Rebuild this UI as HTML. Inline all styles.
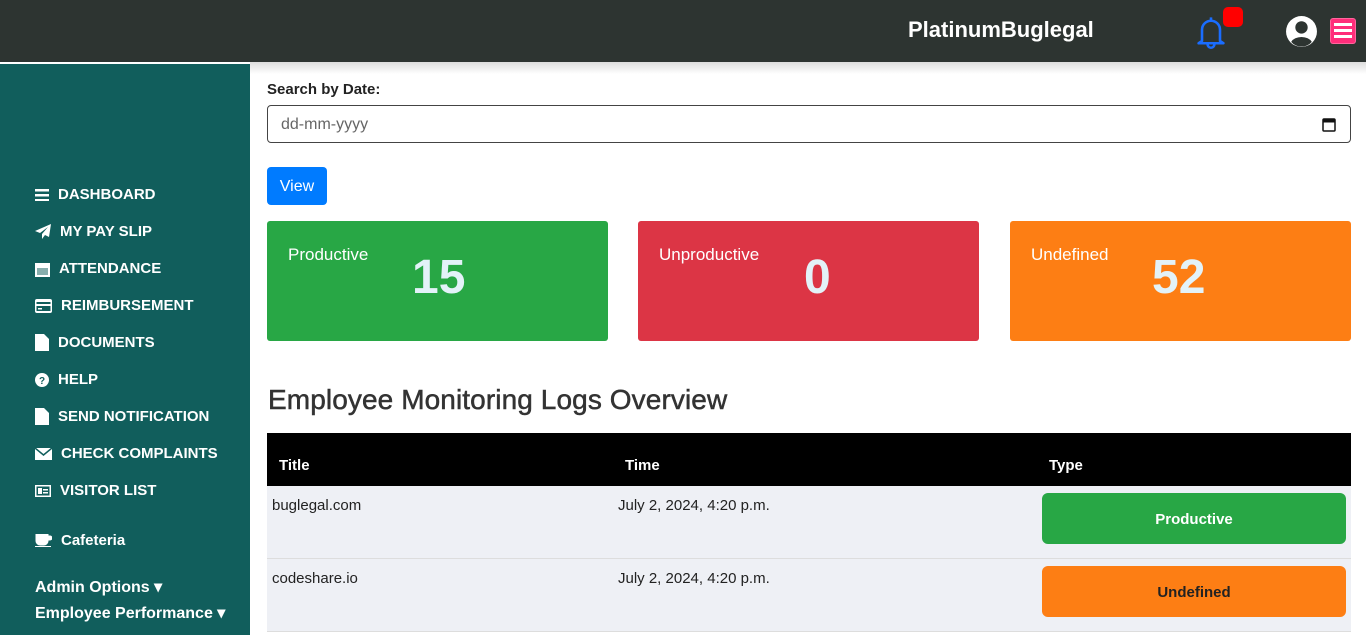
<!DOCTYPE html>
<html><head><meta charset="utf-8"><style>
*{margin:0;padding:0;box-sizing:border-box}
body{width:1366px;height:635px;overflow:hidden;font-family:"Liberation Sans",sans-serif;background:#fff;position:relative}
.hdr{position:absolute;left:0;top:0;width:1366px;height:62px;background:#2d3431}
.brand{position:absolute;left:908px;top:17px;color:#fff;font-weight:bold;font-size:22px}
.shadow{position:absolute;left:250px;top:62px;width:1116px;height:12px;background:linear-gradient(#ddd,#fff)}
.side{position:absolute;left:0;top:64px;width:250px;height:571px;background:#115e5c;color:#fff}
.side div{position:absolute;left:35px;font-weight:bold;font-size:15px;display:flex;align-items:center}
.side svg{margin-right:9px}
.lbl{position:absolute;left:267px;top:81px;font-weight:bold;font-size:15px;color:#222}
.inp{position:absolute;left:267px;top:105px;width:1084px;height:38px;border:1px solid #444;border-radius:4px;font-size:16px;color:#666;padding:10px 13px}
.btn{position:absolute;left:267px;top:167px;width:60px;height:38px;background:#007bff;border-radius:4px;color:#fff;font-size:16px;text-align:center;line-height:40px}
.card{position:absolute;top:221px;width:341px;height:120px;border-radius:3px;color:#fff}
.card span{position:absolute;left:21px;top:24px;font-size:17px}
.card b{position:absolute;top:29px;font-size:48px;color:#e3f2f8}
h2{position:absolute;left:268px;top:384px;font-size:28px;font-weight:bold;color:#333;letter-spacing:.1px}
.th{position:absolute;left:267px;top:433px;width:1084px;height:53px;background:#000;color:#fff;font-weight:bold;font-size:15px}
.th span{position:absolute;top:24px}
.row{position:absolute;left:267px;width:1084px;height:73px;background:#eef0f5;border-bottom:1px solid #ddd;font-size:15px;color:#222}
.row span{position:absolute;top:11px}
.badge{position:absolute;left:775px;top:7px;width:304px;height:51px;border-radius:6px;text-align:center;line-height:53px;font-weight:bold;font-size:15px}
</style></head><body>
<div class="hdr">
<div class="brand">PlatinumBuglegal</div>
<svg style="position:absolute;left:1194px;top:14px" width="34" height="36" viewBox="0 0 30 32"><path d="M15 3v2M7 24V14a8 8 0 0 1 16 0v10l3 2H4z" fill="none" stroke="#1a6dff" stroke-width="2.3" stroke-linejoin="round"/><path d="M12 27a3 3 0 0 0 6 0" fill="none" stroke="#1a6dff" stroke-width="2.3"/></svg>
<div style="position:absolute;left:1223px;top:7px;width:20px;height:20px;background:#f00;border-radius:5px"></div>
<svg style="position:absolute;left:1285px;top:15px" width="33" height="33" viewBox="0 0 32 32"><circle cx="16" cy="16" r="15" fill="#fff"/><circle cx="16" cy="12" r="6" fill="#2d3431"/><path d="M6 26a11 8 0 0 1 20 0a13 13 0 0 1-20 0z" fill="#2d3431"/></svg>
<div style="position:absolute;left:1330px;top:18px;width:26px;height:26px;background:#ff2d7a;border-radius:3px;border:1px solid #fff4"></div>
<div style="position:absolute;left:1334px;top:23px;width:18px;height:2.5px;background:#fff;box-shadow:0 6px #fff,0 12px #fff"></div>
</div>
<div class="shadow"></div>
<div class="side">
<div style="top:122px"><svg width="14" height="12"><rect y="0" width="14" height="2.5" fill="#fff"/><rect y="5" width="14" height="2.5" fill="#fff"/><rect y="10" width="14" height="2.5" fill="#fff"/></svg>DASHBOARD</div>
<div style="top:159px"><svg width="16" height="15" viewBox="0 0 16 15"><path d="M16 0L0 7l5 2 8-6-6 7v5l3-4 4 2z" fill="#fff"/></svg>MY PAY SLIP</div>
<div style="top:196px"><svg width="15" height="16"><rect y="2" width="15" height="14" fill="#fff"/><rect x="2" y="7" width="11" height="7" fill="#115e5c" opacity=".5"/></svg>ATTENDANCE</div>
<div style="top:233px"><svg width="17" height="14"><rect width="17" height="14" rx="2" fill="#fff"/><rect x="1.5" y="3" width="14" height="2" fill="#115e5c"/><rect x="1.5" y="7" width="14" height="5" fill="#115e5c"/><rect x="3" y="9" width="4" height="1.5" fill="#fff"/></svg>REIMBURSEMENT</div>
<div style="top:270px"><svg width="14" height="17"><path d="M0 0h9l5 5v12H0z" fill="#fff"/></svg>DOCUMENTS</div>
<div style="top:307px"><svg width="14" height="14"><circle cx="7" cy="7" r="7" fill="#fff"/><text x="7" y="11" font-size="10" font-weight="bold" text-anchor="middle" fill="#115e5c" font-family="Liberation Sans">?</text></svg>HELP</div>
<div style="top:344px"><svg width="14" height="17"><path d="M0 0h9l5 5v12H0z" fill="#fff"/></svg>SEND NOTIFICATION</div>
<div style="top:381px"><svg width="17" height="12"><rect width="17" height="12" fill="#fff"/><path d="M0 0l8.5 7L17 0" fill="none" stroke="#115e5c" stroke-width="1.5"/></svg>CHECK COMPLAINTS</div>
<div style="top:418px"><svg width="16" height="12"><rect width="16" height="12" fill="#fff"/><rect x="1.5" y="1.5" width="13" height="9" fill="#115e5c"/><rect x="3" y="3" width="4" height="6" fill="#fff"/><rect x="8" y="4" width="5" height="1.5" fill="#fff"/><rect x="8" y="7" width="5" height="1.5" fill="#fff"/></svg>VISITOR LIST</div>
<div style="top:468px;font-size:15px"><svg width="17" height="13"><path d="M1 0h12v7a4 4 0 0 1-4 4H5a4 4 0 0 1-4-4z M13 2h2a2 2 0 0 1 0 4h-2" fill="#fff" stroke="#fff"/><rect y="12" width="16" height="1.5" fill="#fff"/></svg>Cafeteria</div>
<div style="top:513px;font-size:16px">Admin Options ▾</div>
<div style="top:539px;font-size:16px">Employee Performance ▾</div>
</div>
<div class="lbl">Search by Date:</div>
<div class="inp">dd-mm-yyyy<svg style="position:absolute;right:14px;top:11px" width="14" height="15"><rect x="1" y="2" width="12" height="12" rx="1" fill="none" stroke="#111" stroke-width="1.5"/><rect x="1" y="2" width="12" height="3.5" fill="#111"/></svg></div>
<div class="btn">View</div>
<div class="card" style="left:267px;background:#28a745"><span>Productive</span><b style="left:145px">15</b></div>
<div class="card" style="left:638px;background:#dc3545"><span>Unproductive</span><b style="left:166px">0</b></div>
<div class="card" style="left:1010px;background:#fd7e14"><span>Undefined</span><b style="left:142px">52</b></div>
<h2 style="font-weight:normal;-webkit-text-stroke:0.5px #333">Employee Monitoring Logs Overview</h2>
<div class="th"><span style="left:12px">Title</span><span style="left:358px">Time</span><span style="left:782px">Type</span></div>
<div class="row" style="top:486px"><span style="left:5px">buglegal.com</span><span style="left:351px">July 2, 2024, 4:20 p.m.</span><div class="badge" style="background:#28a745;color:#fff">Productive</div></div>
<div class="row" style="top:559px"><span style="left:5px">codeshare.io</span><span style="left:351px">July 2, 2024, 4:20 p.m.</span><div class="badge" style="background:#fd7e14;color:#222">Undefined</div></div>
</body></html>
